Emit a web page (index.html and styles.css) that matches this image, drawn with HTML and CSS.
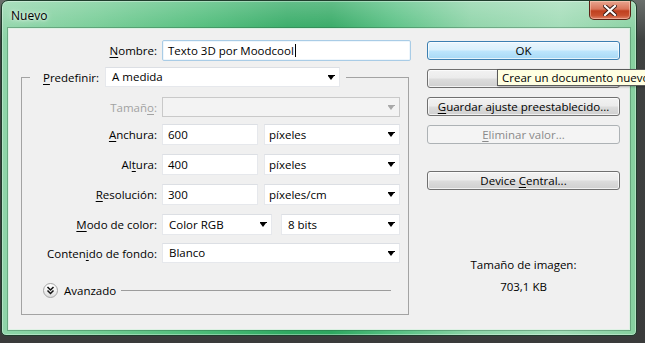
FILE: index.html
```html
<!DOCTYPE html>
<html lang="es">
<head>
<meta charset="utf-8">
<title>Nuevo</title>
<link rel="stylesheet" href="styles.css">
</head>
<body>
<div class="window">
  <div class="titlebar">
    <span class="title">Nuevo</span>
    <span class="close"><svg width="14" height="11" viewBox="0 0 14 11"><path d="M2 1 L12 10 M12 1 L2 10" stroke="#3a1a14" stroke-width="4" stroke-linecap="square"/><path d="M2 1 L12 10 M12 1 L2 10" stroke="#ffffff" stroke-width="2.2" stroke-linecap="square"/></svg></span>
  </div>
  <div class="client">
    <div class="left">
      <div class="row-top">
        <label class="lbl"><u>N</u>ombre:</label>
        <div class="input focus name">Texto 3D por Moodcool<span class="caret"></span></div>
      </div>
      <fieldset class="group">
        <legend class="legend">
          <label class="lbl-plain"><u>P</u>redefinir:</label>
          <div class="select preset">A medida<span class="arrow"></span></div>
        </legend>
        <div class="grid">
          <label class="lbl disabled">Tamañ<u>o</u>:</label>
          <div class="select full dis"><span class="arrow grey"></span></div>

          <label class="lbl r-anchura"><u>A</u>nchura:</label>
          <div class="pair r-anchura">
            <div class="input num">600</div>
            <div class="select unit">píxeles<span class="arrow"></span></div>
          </div>

          <label class="lbl r-step">Al<u>t</u>ura:</label>
          <div class="pair r-step">
            <div class="input num">400</div>
            <div class="select unit">píxeles<span class="arrow"></span></div>
          </div>

          <label class="lbl r-step"><u>R</u>esolución:</label>
          <div class="pair r-step">
            <div class="input num">300</div>
            <div class="select unit">píxeles/cm<span class="arrow"></span></div>
          </div>

          <label class="lbl r-step"><u>M</u>odo de color:</label>
          <div class="pair wide r-step">
            <div class="select mode">Color RGB<span class="arrow"></span></div>
            <div class="select bits">8 bits<span class="arrow"></span></div>
          </div>

          <label class="lbl r-bg">Conten<u>i</u>do de fondo:</label>
          <div class="select full r-bg">Blanco<span class="arrow"></span></div>
        </div>
        <div class="advanced">
          <span class="adv-icon"><svg width="9" height="9" viewBox="0 0 9 9"><path d="M1.5 1 L4.5 4 L7.5 1 M1.5 4.5 L4.5 7.5 L7.5 4.5" fill="none" stroke="#111" stroke-width="1.5"/></svg></span>
          <span class="adv-text">Avanzado</span>
          <span class="adv-line"></span>
        </div>
      </fieldset>
    </div>
    <div class="right">
      <div class="btn ok">OK</div>
      <div class="btn">Cancelar</div>
      <div class="btn"><u>G</u>uardar ajuste preestablecido...</div>
      <div class="btn off"><u>E</u>liminar valor...</div>
      <div class="btn device">Device <u>C</u>entral...</div>
      <div class="info">
        <div class="info-label">Tamaño de imagen:</div>
        <div class="info-value">703,1 KB</div>
      </div>
    </div>
    <div class="tooltip">Crear un documento nuevo</div>
  </div>
</div>
</body>
</html>
```

FILE: styles.css
```css
* { box-sizing: border-box; }
html, body { margin: 0; padding: 0; }
body {
  width: 645px;
  height: 343px;
  overflow: hidden;
  background: linear-gradient(180deg, #6a6f6c 0px, #3f4241 40px, #3a3b3b 100%);
  font-family: "Open Sans", "Noto Sans", sans-serif;
  font-size: 11.5px;
  color: #000;
}
u { text-decoration: underline; text-underline-offset: 2px; }

.window {
  margin-left: 1px;
  width: 636px;
  height: 336px;
  border: 1px solid #1f3d2c;
  border-radius: 7px 7px 5px 5px;
  padding: 0 7px 6px 7px;
  background:
    linear-gradient(180deg, rgba(255,255,255,0.25) 0px, rgba(255,255,255,0.05) 28px, rgba(0,0,0,0) 40px),
    linear-gradient(90deg, #8fd5a9 0%, #72cb93 15%, #4bbb77 32%, #30a962 45%, #2ea760 52%, #56c082 62%, #8bd3a6 74%, #9fdbb5 88%, #86d09f 100%);
  box-shadow: inset 0 0 0 1px rgba(255,255,255,0.35);
}

.titlebar {
  height: 28px;
  display: flex;
  align-items: flex-start;
}
.title {
  margin-top: 6px;
  margin-left: 2px;
  font-size: 12px;
  color: #000;
  text-shadow: 0 0 6px rgba(255,255,255,0.9), 0 0 3px rgba(255,255,255,0.8);
}
.close {
  margin-left: auto;
  margin-right: -2px;
  width: 42px;
  height: 19px;
  border: 1px solid #5a2216;
  border-top: none;
  border-radius: 0 0 5px 5px;
  background: linear-gradient(180deg, #e9a58f 0%, #d9755a 45%, #c0401f 55%, #c8502e 80%, #e0826a 100%);
  box-shadow: inset 0 0 0 1px rgba(255,220,200,0.45);
  display: flex;
  align-items: center;
  justify-content: center;
}

.client {
  position: relative;
  width: 620px;
  height: 300px;
  background: #f0f0f0;
  box-shadow: 0 0 0 1px rgba(235,250,240,0.9), 0 0 0 2px rgba(40,90,60,0.35);
  display: flex;
  padding: 11px 0 0 12px;
}

.left { width: 390px; }
.right {
  margin-left: 16px;
  width: 193px;
  padding-top: 1px;
}

.row-top {
  display: flex;
  align-items: center;
  height: 21px;
}
.lbl {
  text-align: right;
  white-space: nowrap;
}
.row-top .lbl { width: 136px; margin-right: 5px; }

.input, .select {
  position: relative;
  height: 21px;
  background: #fff;
  border: 1px solid #e6e8ec;
  border-top-color: #dcdfe4;
  line-height: 19px;
  padding-left: 5px;
  white-space: nowrap;
}
.input.focus {
  border: 1px solid #a9cce6;
  border-radius: 2px;
  box-shadow: inset 0 0 0 1px #eef6fc;
}
.name { width: 249px; }
.caret {
  display: inline-block;
  width: 1px;
  height: 13px;
  background: #000;
  vertical-align: -2px;
  margin-left: 1px;
}

.select { height: 20px; line-height: 18px; padding-left: 6px; }
.arrow {
  position: absolute;
  right: 5px;
  top: 8px;
  width: 0;
  height: 0;
  border-left: 3.5px solid transparent;
  border-right: 3.5px solid transparent;
  border-top: 4px solid #000;
}
.arrow::before {
  content: "";
  position: absolute;
  left: -3.5px;
  top: -5px;
  width: 7px;
  height: 1px;
  background: #000;
}
.arrow.grey { border-top-color: #a8a8a8; }
.arrow.grey::before { background: #a8a8a8; }

.group {
  margin: 6px 0 0 0;
  padding: 0 8px 16px 0;
  width: 388px;
  border: 1px solid #a3a3a3;
  min-width: 0;
}
.legend {
  margin-left: 8px;
  padding: 0 6px 0 13px;
  display: flex;
  align-items: center;
  height: 20px;
}
.lbl-plain { margin-right: 6px; }
.preset { width: 235px; }

.grid {
  display: grid;
  grid-template-columns: 135px 238px;
  column-gap: 5px;
  align-items: center;
  margin-top: 10px;
}
.grid .lbl { align-self: center; }
.disabled { color: #a2a2a2; }
.select.dis {
  background: #f3f3f3;
  border: 1px solid #c9c9c9;
}
.full { width: 238px; }
.r-anchura { margin-top: 7px; }
.r-step { margin-top: 9px; }
.r-bg { margin-top: 8px; }
.pair { display: flex; gap: 6px; height: 21px; }
.pair.wide { gap: 9px; }
.num { width: 96px; }
.unit { width: 136px; height: 21px; line-height: 19px; padding-left: 4px; }
.mode { width: 110px; height: 21px; line-height: 19px; }
.bits { width: 119px; height: 21px; line-height: 19px; }

.advanced {
  display: flex;
  align-items: center;
  margin-top: 19px;
  padding-left: 21px;
  height: 16px;
}
.adv-icon {
  width: 15px;
  height: 15px;
  border-radius: 50%;
  border: 1px solid #a5a5a5;
  background: linear-gradient(180deg, #ffffff 0%, #f2f2f2 50%, #dcdcdc 100%);
  display: flex;
  align-items: center;
  justify-content: center;
}
.adv-text { margin-left: 6px; }
.adv-line {
  margin-left: 5px;
  width: 270px;
  height: 1px;
  background: #9c9c9c;
}

.btn {
  height: 19px;
  margin-top: 9px;
  border: 1px solid #707070;
  border-radius: 3px;
  background: linear-gradient(180deg, #f2f2f2 0%, #ebebeb 49%, #dddddd 51%, #cfcfcf 100%);
  box-shadow: inset 0 0 0 1px rgba(255,255,255,0.7);
  text-align: center;
  line-height: 17px;
  white-space: nowrap;
}
.btn.ok {
  margin-top: 0;
  border-color: #3c7fb1;
  background: linear-gradient(180deg, #eaf6fd 0%, #d9f0fc 49%, #bee6fd 51%, #a7d9f5 100%);
}
.btn.off {
  border-color: #adb2b5;
  background: #f4f4f4;
  color: #8a8a8a;
  box-shadow: none;
}
.btn.device { margin-top: 27px; }

.info {
  margin-top: 67px;
  text-align: center;
}
.info-value { margin-top: 7px; }

.tooltip {
  position: absolute;
  left: 488px;
  top: 40px;
  height: 17px;
  padding: 0 4px 0 4px;
  background: #ffffe1;
  border: 1px solid #5a5a5a;
  line-height: 15px;
  white-space: nowrap;
  font-size: 11.5px;
  box-shadow: 1px 1px 2px rgba(0,0,0,0.3);
}
```
